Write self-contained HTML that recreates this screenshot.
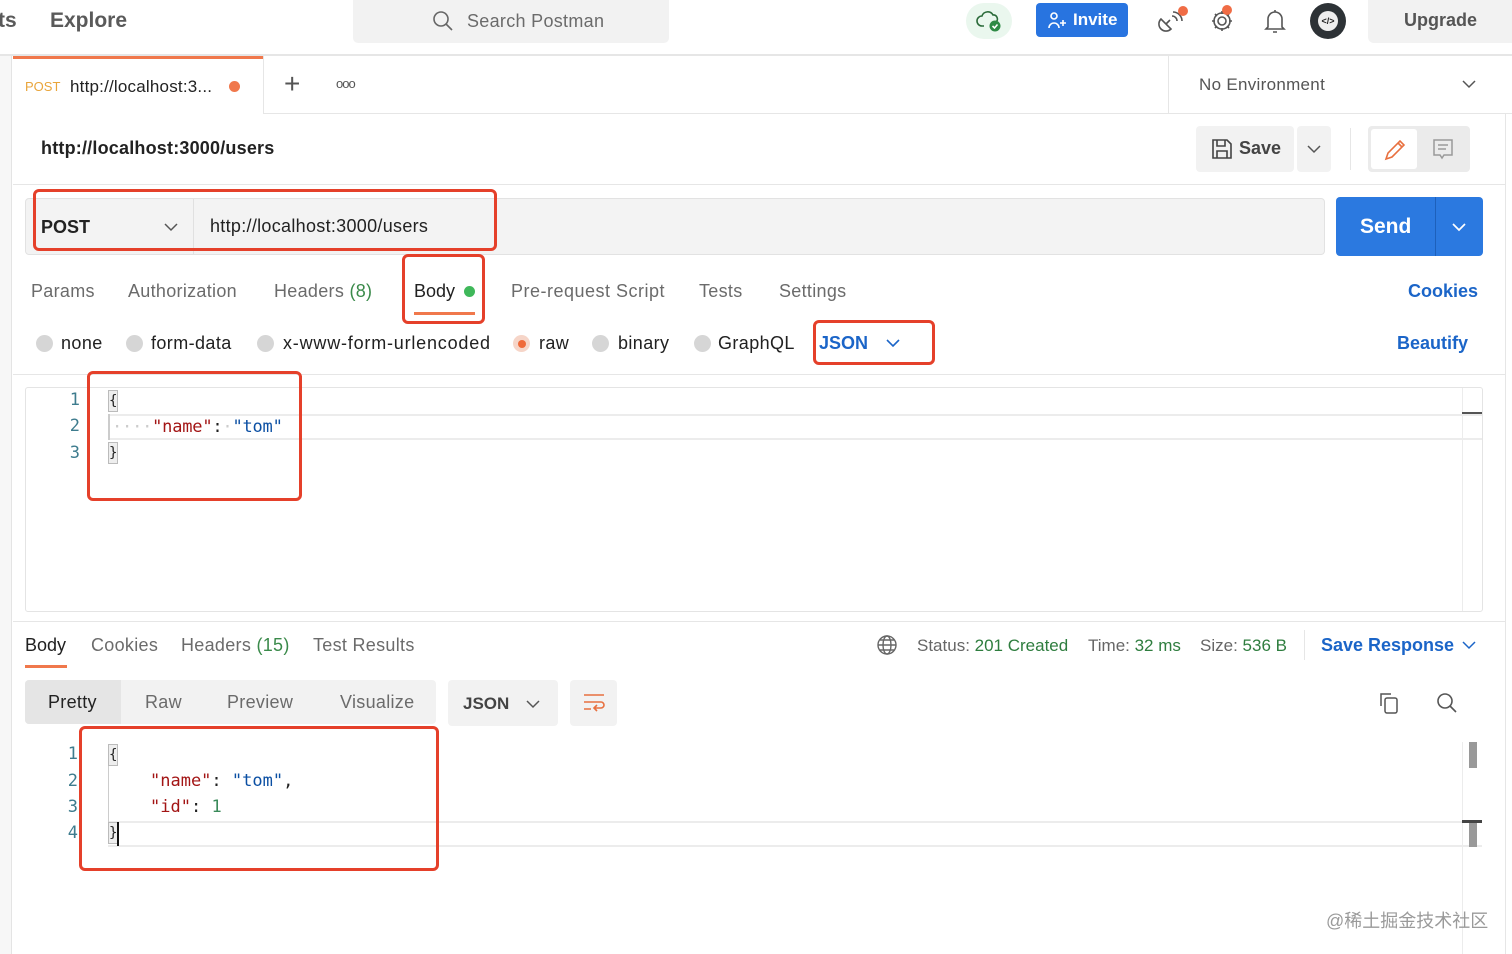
<!DOCTYPE html>
<html><head><meta charset="utf-8"><style>
*{margin:0;padding:0;box-sizing:border-box}
body{width:1512px;height:954px;overflow:hidden;background:#fff;font-family:"Liberation Sans",sans-serif;position:relative;color:#212121}
.a{position:absolute;white-space:nowrap}
.t{font-size:18px;color:#6b6b6b;letter-spacing:0.3px}
.rl{font-size:18px;letter-spacing:0.4px}
.mono{font-family:"DejaVu Sans Mono","Liberation Mono",monospace;font-size:16px}
.red{position:absolute;border:3px solid #e5402a;border-radius:6px}
.ln{position:absolute;left:0;width:80px;text-align:right;color:#3e7c8e;font-size:17px;font-family:"DejaVu Sans Mono",monospace}
.k{color:#a31515}.s{color:#0b4fa3}.n{color:#3a8a5a}
.br{position:absolute;width:10px;height:22px;background:#eee;border:1px solid #bbb;font-family:"DejaVu Sans Mono",monospace;font-size:14px;line-height:20px;text-align:center}
.rd{position:absolute;width:17px;height:17px;border-radius:50%;background:#d6d6d6}
</style></head><body>
<div class="a" style="left:-2px;top:9px;font-size:21px;color:#5a5a5a;font-weight:bold">ts</div>
<div class="a" style="left:50px;top:9px;font-size:21px;color:#5a5a5a;font-weight:bold">Explore</div>
<div class="a" style="left:353px;top:0;width:316px;height:43px;background:#f2f2f2;border-radius:0 0 5px 5px"></div>
<svg class="a" style="left:431px;top:9px" width="24" height="24" viewBox="0 0 24 24" fill="none" stroke="#666" stroke-width="1.6"><circle cx="10" cy="10" r="7"/><path d="M15 15l6 6"/></svg>
<div class="a t" style="left:467px;top:11px">Search Postman</div>
<div class="a" style="left:966px;top:3px;width:46px;height:36px;border-radius:18px;background:#eaf7ee"></div>
<svg class="a" style="left:976px;top:8px" width="28" height="26" viewBox="0 0 28 26" fill="none" stroke="#2b6b3a" stroke-width="1.6"><path d="M8 18H6a5 5 0 010-10 6 6 0 0111-1 4 4 0 013 7"/><circle cx="19" cy="18" r="5.5" fill="#2e8a45" stroke="none"/><path d="M16.5 18l2 2 3-3.5" stroke="#fff"/></svg>
<div class="a" style="left:1036px;top:3px;width:92px;height:34px;background:#2874e0;border-radius:4px"></div>
<svg class="a" style="left:1047px;top:11px" width="20" height="20" viewBox="0 0 20 20" fill="none" stroke="#fff" stroke-width="1.6"><circle cx="7" cy="5" r="3"/><path d="M2 17a5 5 0 0110 0M13 12h6M16 9v6"/></svg>
<div class="a" style="left:1073px;top:10px;font-size:17px;color:#fff;font-weight:bold">Invite</div>
<svg class="a" style="left:1156px;top:4px" width="34" height="30" viewBox="0 0 34 30" fill="none" stroke="#555" stroke-width="1.6"><path d="M5 15a7 7 0 0010 10zM10 20l4-4M16 12a5 5 0 015 5M17 8a9 9 0 019 9"/><circle cx="27" cy="7" r="5" fill="#f06c45" stroke="none"/></svg>
<svg class="a" style="left:1208px;top:4px" width="34" height="30" viewBox="0 0 34 30" fill="none" stroke="#555" stroke-width="1.6"><circle cx="14" cy="17" r="4"/><path d="M14 7v3M14 24v3M4 17h3M21 17h3M7 10l2 2M19 22l2 2M7 24l2-2M19 12l2-2"/><circle cx="14" cy="17" r="8"/><circle cx="19" cy="6" r="5" fill="#f06c45" stroke="none"/></svg>
<svg class="a" style="left:1262px;top:6px" width="26" height="30" viewBox="0 0 26 30" fill="none" stroke="#555" stroke-width="1.6"><path d="M6 21V13a7 7 0 0114 0v8l2 2H4zM11 26h4M13 4v2"/></svg>
<div class="a" style="left:1310px;top:3px;width:36px;height:36px;border-radius:50%;background:#2d3236"></div>
<div class="a" style="left:1318px;top:11px;width:20px;height:20px;border-radius:50%;background:#eee;font-size:9px;line-height:20px;text-align:center;color:#222;font-weight:bold">&lt;/&gt;</div>
<div class="a" style="left:1368px;top:0;width:150px;height:43px;background:#f2f2f2;border-radius:0 0 0 6px"></div>
<div class="a" style="left:1404px;top:10px;font-size:18px;color:#555;font-weight:bold">Upgrade</div>
<div class="a" style="left:0;top:54px;width:1512px;height:2px;background:#e6e6e6"></div>
<div class="a" style="left:0;top:56px;width:12px;height:898px;background:#f7f7f7;border-right:1px solid #e4e4e4"></div>
<div class="a" style="left:13px;top:56px;width:250px;height:3px;background:#f0784c"></div>
<div class="a" style="left:263px;top:56px;width:1px;height:58px;background:#e6e6e6"></div>
<div class="a" style="left:263px;top:113px;width:1249px;height:1px;background:#e6e6e6"></div>
<div class="a" style="left:25px;top:79px;font-size:13px;color:#e9a53b">POST</div>
<div class="a" style="left:70px;top:77px;font-size:17px;color:#222;letter-spacing:0.2px">http://localhost:3...</div>
<div class="a" style="left:229px;top:81px;width:11px;height:11px;border-radius:50%;background:#f0784c"></div>
<div class="a" style="left:284px;top:68px;font-size:28px;color:#555;font-weight:200">+</div>
<div class="a" style="left:336px;top:76px;font-size:13px;color:#555;letter-spacing:-1px">ooo</div>
<div class="a" style="left:1168px;top:56px;width:1px;height:57px;background:#e6e6e6"></div>
<div class="a t" style="left:1199px;top:75px;font-size:17px;color:#555">No Environment</div>
<svg class="a" style="left:1462px;top:79px" width="14" height="10" viewBox="0 0 14 10" fill="none" stroke="#555" stroke-width="1.5"><path d="M1 2l6 6 6-6"/></svg>
<div class="a" style="left:41px;top:138px;font-size:18px;font-weight:bold;color:#222;letter-spacing:0.2px">http://localhost:3000/users</div>
<div class="a" style="left:1196px;top:126px;width:98px;height:46px;background:#f2f2f2;border-radius:4px"></div>
<div class="a" style="left:1297px;top:126px;width:34px;height:46px;background:#f2f2f2;border-radius:4px"></div>
<svg class="a" style="left:1210px;top:137px" width="24" height="24" viewBox="0 0 24 24" fill="none" stroke="#444" stroke-width="1.6"><path d="M3 3h14l4 4v14H3zM7 3v6h8V3M7 21v-7h10v7"/></svg>
<div class="a" style="left:1239px;top:138px;font-size:18px;font-weight:bold;color:#444">Save</div>
<svg class="a" style="left:1307px;top:144px" width="14" height="10" viewBox="0 0 14 10" fill="none" stroke="#555" stroke-width="1.5"><path d="M1 2l6 6 6-6"/></svg>
<div class="a" style="left:1350px;top:128px;width:1px;height:42px;background:#e6e6e6"></div>
<div class="a" style="left:1368px;top:126px;width:102px;height:46px;background:#ebebeb;border-radius:4px"></div>
<div class="a" style="left:1371px;top:129px;width:46px;height:40px;background:#fff;border-radius:3px"></div>
<svg class="a" style="left:1383px;top:136px" width="24" height="26" viewBox="0 0 24 26" fill="none" stroke="#e8703f" stroke-width="1.6"><path d="M3 23l2-6L17 5l4 4L9 21zM15 7l4 4"/></svg>
<svg class="a" style="left:1431px;top:137px" width="24" height="24" viewBox="0 0 24 24" fill="none" stroke="#999" stroke-width="1.5"><path d="M3 3h18v15h-8l-2 3-2-3H3zM7 8h10M7 12h8"/></svg>
<div class="a" style="left:1505px;top:114px;width:1px;height:840px;background:#e6e6e6"></div>
<div class="a" style="left:13px;top:184px;width:1492px;height:1px;background:#e6e6e6"></div>
<div class="a" style="left:25px;top:198px;width:1300px;height:57px;background:#f3f3f3;border:1px solid #e2e2e2;border-radius:4px"></div>
<div class="a" style="left:193px;top:199px;width:1px;height:55px;background:#e0e0e0"></div>
<div class="a" style="left:41px;top:217px;font-size:18px;font-weight:bold;color:#222">POST</div>
<svg class="a" style="left:164px;top:222px" width="14" height="10" viewBox="0 0 14 10" fill="none" stroke="#555" stroke-width="1.5"><path d="M1 2l6 6 6-6"/></svg>
<div class="a" style="left:210px;top:216px;font-size:18px;color:#222;letter-spacing:0.3px">http://localhost:3000/users</div>
<div class="a" style="left:1336px;top:197px;width:147px;height:59px;background:#2b79e0;border-radius:4px"></div>
<div class="a" style="left:1435px;top:197px;width:1px;height:59px;background:#1d60bb"></div>
<div class="a" style="left:1360px;top:215px;font-size:21px;color:#fff;font-weight:bold">Send</div>
<svg class="a" style="left:1452px;top:222px" width="14" height="10" viewBox="0 0 14 10" fill="none" stroke="#fff" stroke-width="1.7"><path d="M1 2l6 6 6-6"/></svg>
<div class="a t" style="left:31px;top:281px">Params</div>
<div class="a t" style="left:128px;top:281px">Authorization</div>
<div class="a t" style="left:274px;top:281px">Headers <span style="color:#3a8a4a">(8)</span></div>
<div class="a" style="left:414px;top:281px;font-size:18px;color:#212121">Body</div>
<div class="a" style="left:464px;top:286px;width:11px;height:11px;border-radius:50%;background:#3fb85a"></div>
<div class="a" style="left:414px;top:312px;width:61px;height:3px;background:#f0784c"></div>
<div class="a t" style="left:511px;top:281px;letter-spacing:0.5px">Pre-request Script</div>
<div class="a t" style="left:699px;top:281px">Tests</div>
<div class="a t" style="left:779px;top:281px">Settings</div>
<div class="a" style="left:1408px;top:281px;font-size:18px;color:#1b65c8;font-weight:bold">Cookies</div>
<div class="rd" style="left:36px;top:335px"></div><div class="a rl" style="left:61px;top:333px">none</div>
<div class="rd" style="left:126px;top:335px"></div><div class="a rl" style="left:151px;top:333px">form-data</div>
<div class="rd" style="left:257px;top:335px"></div><div class="a rl" style="left:283px;top:333px;letter-spacing:0.8px">x-www-form-urlencoded</div>
<div class="rd" style="left:513px;top:335px;background:#f6d5c8"></div><div class="a" style="left:518px;top:340px;width:8px;height:8px;border-radius:50%;background:#ef6a3a"></div><div class="a rl" style="left:539px;top:333px">raw</div>
<div class="rd" style="left:592px;top:335px"></div><div class="a rl" style="left:618px;top:333px">binary</div>
<div class="rd" style="left:694px;top:335px"></div><div class="a rl" style="left:718px;top:333px">GraphQL</div>
<div class="a" style="left:819px;top:333px;font-size:18px;color:#1b65c8;font-weight:bold">JSON</div>
<svg class="a" style="left:886px;top:338px" width="14" height="10" viewBox="0 0 14 10" fill="none" stroke="#1b65c8" stroke-width="1.6"><path d="M1 2l6 6 6-6"/></svg>
<div class="a" style="left:1397px;top:333px;font-size:18px;color:#1b65c8;font-weight:bold">Beautify</div>
<div class="a" style="left:13px;top:374px;width:1492px;height:1px;background:#e6e6e6"></div>
<div class="a" style="left:25px;top:387px;width:1458px;height:225px;border:1px solid #e4e4e4;border-radius:3px"></div>
<div class="a" style="left:108px;top:414px;width:1374px;height:26px;border-top:2px solid #ececec;border-bottom:2px solid #ececec"></div>
<div class="a" style="left:1462px;top:388px;width:1px;height:223px;background:#ececec"></div>
<div class="a" style="left:1462px;top:412px;width:20px;height:2px;background:#555"></div>
<div class="ln" style="top:390px">1</div><div class="ln" style="top:416px">2</div><div class="ln" style="top:443px">3</div>
<div class="br" style="left:108px;top:390px">{</div>
<div class="a" style="left:108px;top:414px;width:2px;height:26px;background:#ccc"></div>
<div class="a mono" style="left:112px;top:417px;font-size:17px;letter-spacing:-0.2px"><span style="color:#ccc">····</span><span class="k">"name"</span>:<span style="color:#ccc">·</span><span class="s">"tom"</span></div>
<div class="br" style="left:108px;top:442px">}</div>
<div class="a" style="left:13px;top:621px;width:1492px;height:1px;background:#e6e6e6"></div>
<div class="a" style="left:25px;top:635px;font-size:18px">Body</div>
<div class="a" style="left:25px;top:665px;width:42px;height:3px;background:#f0784c"></div>
<div class="a t" style="left:91px;top:635px">Cookies</div>
<div class="a t" style="left:181px;top:635px">Headers <span style="color:#3a8a4a">(15)</span></div>
<div class="a t" style="left:313px;top:635px">Test Results</div>
<svg class="a" style="left:876px;top:634px" width="22" height="22" viewBox="0 0 22 22" fill="none" stroke="#666" stroke-width="1.4"><circle cx="11" cy="11" r="9"/><ellipse cx="11" cy="11" rx="4" ry="9"/><path d="M2 11h18M4 6h14M4 16h14"/></svg>
<div class="a" style="left:917px;top:636px;font-size:17px;color:#666">Status: <span style="color:#2e7d3e">201 Created</span></div>
<div class="a" style="left:1088px;top:636px;font-size:17px;color:#666">Time: <span style="color:#2e7d3e">32 ms</span></div>
<div class="a" style="left:1200px;top:636px;font-size:17px;color:#666">Size: <span style="color:#2e7d3e">536 B</span></div>
<div class="a" style="left:1304px;top:630px;width:1px;height:30px;background:#e6e6e6"></div>
<div class="a" style="left:1321px;top:635px;font-size:18px;color:#1b65c8;font-weight:bold">Save Response</div>
<svg class="a" style="left:1462px;top:640px" width="14" height="10" viewBox="0 0 14 10" fill="none" stroke="#1b65c8" stroke-width="1.5"><path d="M1 2l6 6 6-6"/></svg>
<div class="a" style="left:25px;top:680px;width:411px;height:44px;background:#f2f2f2;border-radius:4px"></div>
<div class="a" style="left:25px;top:680px;width:96px;height:44px;background:#e5e5e5;border-radius:4px 0 0 4px"></div>
<div class="a" style="left:48px;top:692px;font-size:18px;color:#222;letter-spacing:0.3px">Pretty</div>
<div class="a t" style="left:145px;top:692px">Raw</div>
<div class="a t" style="left:227px;top:692px">Preview</div>
<div class="a t" style="left:340px;top:692px">Visualize</div>
<div class="a" style="left:448px;top:680px;width:110px;height:46px;background:#f2f2f2;border-radius:4px"></div>
<div class="a" style="left:463px;top:694px;font-size:17px;font-weight:bold;color:#444">JSON</div>
<svg class="a" style="left:526px;top:699px" width="14" height="10" viewBox="0 0 14 10" fill="none" stroke="#555" stroke-width="1.5"><path d="M1 2l6 6 6-6"/></svg>
<div class="a" style="left:570px;top:680px;width:47px;height:46px;background:#f2f2f2;border-radius:4px"></div>
<svg class="a" style="left:582px;top:692px" width="24" height="22" viewBox="0 0 24 22" fill="none" stroke="#e8703f" stroke-width="1.6"><path d="M2 3h20M2 10h17a3 3 0 010 6h-6M15 13l-3 3 3 3M2 17h7"/></svg>
<svg class="a" style="left:1377px;top:691px" width="24" height="24" viewBox="0 0 24 24" fill="none" stroke="#555" stroke-width="1.5"><path d="M4 15V3h10"/><rect x="8" y="7" width="12" height="15" rx="2"/></svg>
<svg class="a" style="left:1435px;top:691px" width="24" height="24" viewBox="0 0 24 24" fill="none" stroke="#555" stroke-width="1.6"><circle cx="10" cy="10" r="7"/><path d="M15 15l6 6"/></svg>
<div class="a" style="left:108px;top:821px;width:1374px;height:26px;border-top:2px solid #ececec;border-bottom:2px solid #ececec"></div>
<div class="a" style="left:1462px;top:742px;width:1px;height:212px;background:#ececec"></div>
<div class="a" style="left:1469px;top:742px;width:8px;height:26px;background:#999"></div>
<div class="a" style="left:1462px;top:820px;width:20px;height:3px;background:#444"></div>
<div class="a" style="left:1469px;top:823px;width:8px;height:24px;background:#999"></div>
<div class="ln" style="top:744px;width:78px">1</div><div class="ln" style="top:771px;width:78px">2</div><div class="ln" style="top:797px;width:78px">3</div><div class="ln" style="top:823px;width:78px">4</div>
<div class="br" style="left:108px;top:744px">{</div>
<div class="a" style="left:108px;top:766px;width:1px;height:56px;background:#ccc"></div>
<div class="a mono" style="left:150px;top:771px;font-size:17px"><span class="k">"name"</span>: <span class="s">"tom"</span>,</div>
<div class="a mono" style="left:150px;top:797px;font-size:17px"><span class="k">"id"</span>: <span class="n">1</span></div>
<div class="br" style="left:108px;top:822px">}</div>
<div class="a" style="left:117px;top:822px;width:2px;height:24px;background:#111"></div>
<div class="red" style="left:33px;top:189px;width:464px;height:62px"></div>
<div class="red" style="left:402px;top:254px;width:83px;height:70px"></div>
<div class="red" style="left:813px;top:320px;width:122px;height:45px"></div>
<div class="red" style="left:87px;top:371px;width:215px;height:130px"></div>
<div class="red" style="left:79px;top:726px;width:360px;height:145px"></div>
<div class="a" style="left:1326px;top:907px;font-size:18px;color:#9a9a9a;font-family:'Liberation Sans','Noto Sans CJK SC',sans-serif">@稀土掘金技术社区</div>
</body></html>
